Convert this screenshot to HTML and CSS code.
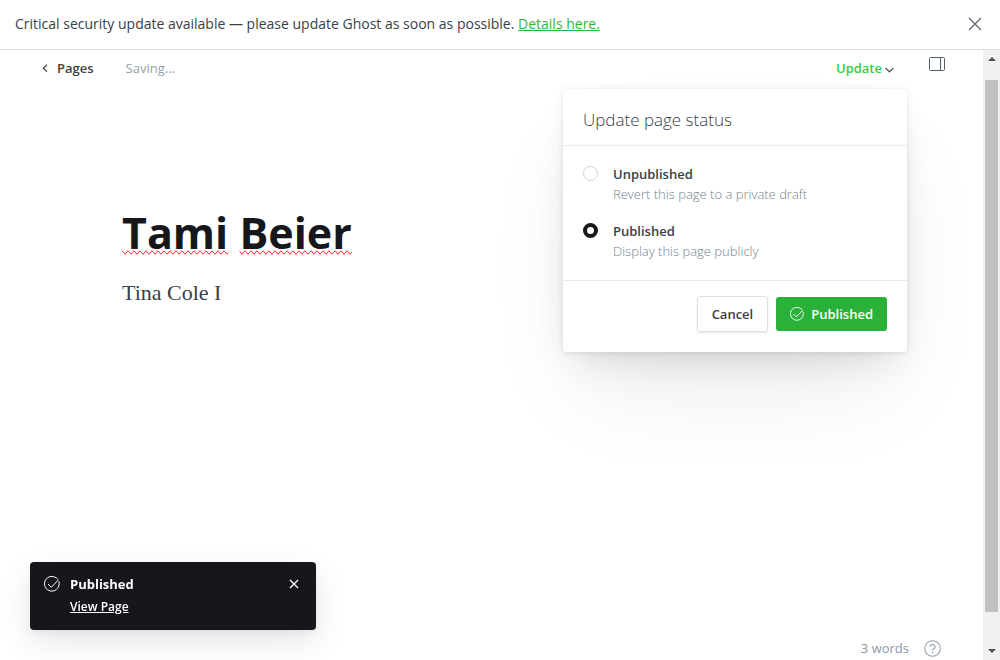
FILE: index.html
```html
<!DOCTYPE html>
<html lang="en">
<head>
<meta charset="utf-8">
<meta name="viewport" content="width=device-width, initial-scale=1">
<title>Tami Beier</title>
<link rel="stylesheet" href="styles.css">
</head>
<body>
<aside class="alert">
  <p class="alert-text">Critical security update available — please update Ghost as soon as possible. <a class="alert-link" href="#details">Details here.</a></p>
  <button class="icon-button" type="button" aria-label="Close alert">
    <svg width="14" height="14" viewBox="0 0 14 14" fill="none" stroke="currentColor" stroke-width="1.1"><path d="M1 1l12 12M13 1L1 13"/></svg>
  </button>
</aside>
<div class="viewport">
  <main class="editor">
    <header class="toolbar">
      <a class="back" href="#pages">
        <svg width="6" height="9" viewBox="0 0 6 9" fill="none" stroke="currentColor" stroke-width="1.2"><path d="M5 .8L1.2 4.200 5 7.600"/></svg>
        Pages
      </a>
      <span class="saving">Saving...</span>
      <div class="publish">
        <button class="update" type="button" aria-expanded="true">Update
          <svg width="9" height="9" viewBox="0 0 9 9" fill="none" stroke="#54606a" stroke-width="1.4"><path d="M.6 4l3.900 3.800L8.400 4"/></svg>
        </button>
        <form class="menu">
          <h2 class="menu-title">Update page status</h2>
          <div class="options">
            <label class="option">
              <input class="radio" type="radio" name="status">
              <span class="option-text"><span class="option-name">Unpublished</span><span class="option-help">Revert this page to a private draft</span></span>
            </label>
            <label class="option">
              <input class="radio" type="radio" name="status" checked>
              <span class="option-text"><span class="option-name">Published</span><span class="option-help">Display this page publicly</span></span>
            </label>
          </div>
          <div class="actions">
            <button class="button cancel" type="button">Cancel</button>
            <button class="button confirm" type="button">
              <svg width="14" height="14" viewBox="0 0 16 16" fill="none" stroke="currentColor" stroke-width="1.1" stroke-linecap="round" stroke-linejoin="round"><path d="M13.4 2.8A7.4 7.4 0 1 0 15 5.7M4.3 8.3l3 3L14.2 4"/></svg>
              Published
            </button>
          </div>
        </form>
      </div>
      <button class="icon-button" type="button" aria-label="Settings">
        <svg width="16" height="14" viewBox="0 0 16 14" fill="none" stroke="currentColor"><rect x=".5" y=".5" width="15" height="13" rx="1"/><path d="M11.500 .5v13"/></svg>
      </button>
    </header>
    <article class="content">
      <h1 class="title"><span class="misspelt">Tami</span> <span class="misspelt">Beier</span></h1>
      <p class="text">Tina Cole I</p>
    </article>
    <footer class="status">
      <span>3 words</span>
      <button class="icon-button help" type="button" aria-label="Help">
        <svg width="17" height="17" viewBox="0 0 17 17" fill="none" stroke="currentColor" stroke-width="1.100"><circle cx="8.500" cy="8.500" r="7.800"/><path d="M6 6.900a2.500 2.300 0 1 1 3.600 2.100Q8.500 9.500 8.500 10.700M8.500 12v1.200"/></svg>
      </button>
    </footer>
  </main>
  <div class="scrollbar" aria-hidden="true">
    <svg class="arrow" width="8" height="4" viewBox="0 0 8 4"><path d="M0 4l4-4 4 4z"/></svg>
    <div class="thumb"></div>
    <svg class="arrow" width="8" height="4" viewBox="0 0 8 4"><path d="M0 0l4 4 4-4z"/></svg>
  </div>
</div>
<div class="toast" role="status">
  <svg width="16" height="16" viewBox="0 0 16 16" fill="none" stroke="currentColor" stroke-linecap="round" stroke-linejoin="round"><path d="M13.400 2.800A7.400 7.400 0 1 0 15 5.700M4.300 8.300l3 3L14.200 4"/></svg>
  <div class="toast-text"><strong class="toast-title">Published</strong><a class="toast-link" href="#view">View Page</a></div>
  <button class="icon-button toast-close" type="button" aria-label="Close notification">
    <svg width="10" height="10" viewBox="0 0 10 10" fill="none" stroke="currentColor" stroke-width="1.300"><path d="M1 1l8 8M9 1L1 9"/></svg>
  </button>
</div>
</body>
</html>
```
FILE: styles.css
```css
* { box-sizing: border-box; }

body {
  margin: 0;
  height: 100vh;
  display: flex;
  flex-direction: column;
  background: #fff;
  color: #394047;
  font: 13px/20px "Open Sans", "Noto Sans", sans-serif;
}

h1, h2, p { margin: 0; }
a { color: inherit; text-decoration: none; }
svg { display: block; flex: none; }
button { padding: 0; border: 0; background: none; color: inherit; font: inherit; }

.icon-button { display: flex; color: #54606a; }

.alert {
  display: flex;
  align-items: center;
  justify-content: space-between;
  height: 50px;
  padding: 0 18px 2px 15px;
  border-bottom: 1px solid #dfe1e3;
}
.alert-text { font-size: 14px; }
.alert-link { color: #30b43c; text-decoration: underline; }

.viewport { flex: 1; min-height: 0; display: flex; }
.editor { flex: 1; display: flex; flex-direction: column; }

.toolbar {
  display: flex;
  align-items: flex-start;
  padding: 7px 38px 0 42px;
}
.back { display: flex; align-items: center; gap: 9px; font-weight: 600; line-height: 22px; }
.saving { margin-left: 32px; color: #95a1ad; line-height: 22px; }

.publish { position: relative; margin-left: auto; margin-right: 35px; }
.update { display: flex; align-items: center; gap: 3px; color: #30cf43; font-weight: 600; line-height: 22px; }

.menu {
  position: absolute;
  top: 32px;
  right: -13px;
  width: 344px;
  border-radius: 4px;
  background: #fff;
  box-shadow: 0 0 7px rgba(0, 0, 0, .08), 0 2px 4px rgba(0, 0, 0, .03), 0 50px 100px -20px rgba(0, 0, 0, .09), 0 18px 36px -12px rgba(0, 0, 0, .12);
}
.menu-title {
  padding: 19px 20px 13px;
  border-bottom: 1px solid #e9ebed;
  font-size: 17px;
  font-weight: 300;
  line-height: 24px;
}
.options { display: grid; gap: 17px; padding: 18px 20px 19px; border-bottom: 1px solid #e9ebed; }
.option { display: flex; align-items: flex-start; gap: 15px; }
.radio {
  appearance: none;
  width: 15px;
  height: 15px;
  margin: 2px 0 0;
  border: 1px solid #ced4d9;
  border-radius: 50%;
}
.radio:checked { border: 4px solid #15171a; }
.option-text { display: grid; }
.option-name { font-weight: 600; }
.option-help { color: #738290; font-weight: 300; }

.actions { display: flex; justify-content: flex-end; align-items: center; gap: 8px; padding: 15px 20px 20px; }
.button { height: 34px; padding: 0 14px; border-radius: 3px; font-weight: 600; }
.cancel { height: 36px; border: 1px solid #dde1e5; box-shadow: 0 1px 2px rgba(0, 0, 0, .1); }
.confirm { display: flex; align-items: center; gap: 7px; background: #2ab13a; color: #fff; }

.content { flex: 1; padding: 127px 122px 0; }
.title { color: #15171a; font-size: 43px; font-weight: 700; line-height: 54px; }
.misspelt { text-decoration: spelling-error; }
.text { margin-top: 17px; font: 22px/32px "Liberation Serif", serif; }

.status {
  display: flex;
  justify-content: flex-end;
  align-items: center;
  gap: 15px;
  padding: 0 42px 2px;
  color: #8a97a4;
}
.help { color: #95a1ad; }

.scrollbar {
  width: 17px;
  display: flex;
  flex-direction: column;
  align-items: center;
  padding: 7px 0;
  background: #f1f1f1;
}
.thumb { flex: 1; width: 13px; margin: 19px 0 37px; background: #c1c1c1; }
.arrow { fill: #505050; }

.toast {
  position: fixed;
  bottom: 30px;
  left: 30px;
  width: 286px;
  display: flex;
  align-items: flex-start;
  gap: 10px;
  padding: 14px 17px 12px 14px;
  border-radius: 4px;
  background: #15171a;
  color: #fff;
  font-size: 12px;
  line-height: 22px;
  box-shadow: 0 3px 7px rgba(0, 0, 0, .06), 0 12px 32px rgba(0, 0, 0, .1);
}
.toast-text { flex: 1; display: grid; gap: 1px; margin-top: -3px; justify-items: start; }
.toast-title { font-size: 13px; }
.toast-link { text-decoration: underline; font-weight: 600; }
.toast-close { margin-top: 3px; color: #fff; }
```
